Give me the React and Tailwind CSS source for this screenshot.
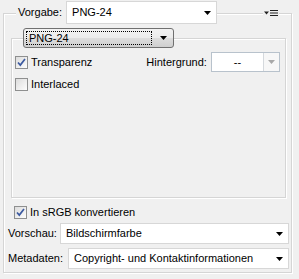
import React from 'react'

const Arrow = ({ color = '#000' }) => (
  <svg width="7" height="4" viewBox="0 0 7 4">
    <path d="M0 0h7L3.5 4z" fill={color} />
  </svg>
)

const Select = ({ value, className = '' }) => (
  <div className={`flex items-center h-[21px] bg-white border border-[#d7d7d7] pl-[5px] pr-[5px] ${className}`}>
    <span className="flex-1 truncate">{value}</span>
    <Arrow />
  </div>
)

const Checkbox = ({ checked }) => (
  <div className="w-[13px] h-[13px] border border-[#8e8f8f] bg-[linear-gradient(135deg,#dcdcdc,#fdfdfd)] flex items-center justify-center shrink-0">
    {checked && (
      <svg width="9" height="9" viewBox="0 0 9 9">
        <path d="M1 4.5l2.3 2.6L8 1" fill="none" stroke="#3c5aa0" strokeWidth="1.7" />
      </svg>
    )}
  </div>
)

const etched = 'border border-[#d5d5d5] shadow-[inset_1px_1px_0_#fff,1px_1px_0_#fff]'

export default function App() {
  return (
    <div className="w-[299px] h-[279px] bg-[#f0f0f0] text-[11px] text-black overflow-hidden pt-px font-['Liberation_Sans',Arial,sans-serif]">
      {/* header */}
      <div className="relative z-10 flex items-center h-[23px] pl-[16px]">
        <span className="bg-[#f0f0f0] pl-[2px] pr-[4px] leading-none">Vorgabe:</span>
        <Select value="PNG-24" className="w-[151px] h-[23px]" />
        <div className="ml-[46px] bg-[#f0f0f0] px-[1px] flex items-center">
          <svg width="14" height="8" viewBox="0 0 14 8">
            <path d="M0 2.5h5L2.5 5.5z" fill="#222" />
            <path d="M6 1.5h8M6 4h8M6 6.5h8" stroke="#222" strokeWidth="1.2" />
          </svg>
        </div>
      </div>

      {/* outer panel */}
      <div className={`ml-[3px] w-[289px] h-[260px] -mt-[11px] ${etched}`}>
        <div className="ml-[7px] mt-[14px] relative z-10 pl-[12px]">
          <div className="w-[151px] h-[20px] rounded-[3px] border border-[#707070] bg-[linear-gradient(#f2f2f2_0%,#ebebeb_50%,#dddddd_51%,#cfcfcf_100%)] flex items-center pl-[2px] pr-[6px]">
            <div className="flex-1 h-[14px] border border-dotted border-black flex items-center pl-[2px]">PNG-24</div>
            <div className="ml-[8px] flex items-center"><Arrow /></div>
          </div>
        </div>
        <div className={`ml-[7px] w-[275px] h-[160px] -mt-[10px] pt-[13px] pl-[3px] ${etched}`}>
          <div className="flex items-center h-[20px]">
            <Checkbox checked />
            <span className="ml-[3px]">Transparenz</span>
            <span className="ml-[54px]">Hintergrund:</span>
            <div className="ml-[4px] w-[69px] h-[20px] border border-[#b8c2cc] bg-white flex">
              <div className="flex-1 flex items-center justify-center">--</div>
              <div className="w-[16px] border-l border-[#d5d9dd] bg-[#f7f7f7] flex items-center justify-center">
                <Arrow color="#a8a8a8" />
              </div>
            </div>
          </div>
          <div className="flex items-center h-[16px] mt-[4px]">
            <Checkbox />
            <span className="ml-[3px]">Interlaced</span>
          </div>
        </div>

        <div className="flex items-center h-[16px] mt-[6px] pl-[10px]">
          <Checkbox checked />
          <span className="ml-[3px]">In sRGB konvertieren</span>
        </div>
        <div className="flex items-center mt-[3px] pl-[4px] pr-[2px]">
          <span>Vorschau:</span>
          <Select value="Bildschirmfarbe" className="ml-auto w-[229px]" />
        </div>
        <div className="flex items-center mt-[4px] pl-[4px] pr-[2px]">
          <span>Metadaten:</span>
          <Select value="Copyright- und Kontaktinformationen" className="ml-auto w-[221px]" />
        </div>
      </div>
    </div>
  )
}
